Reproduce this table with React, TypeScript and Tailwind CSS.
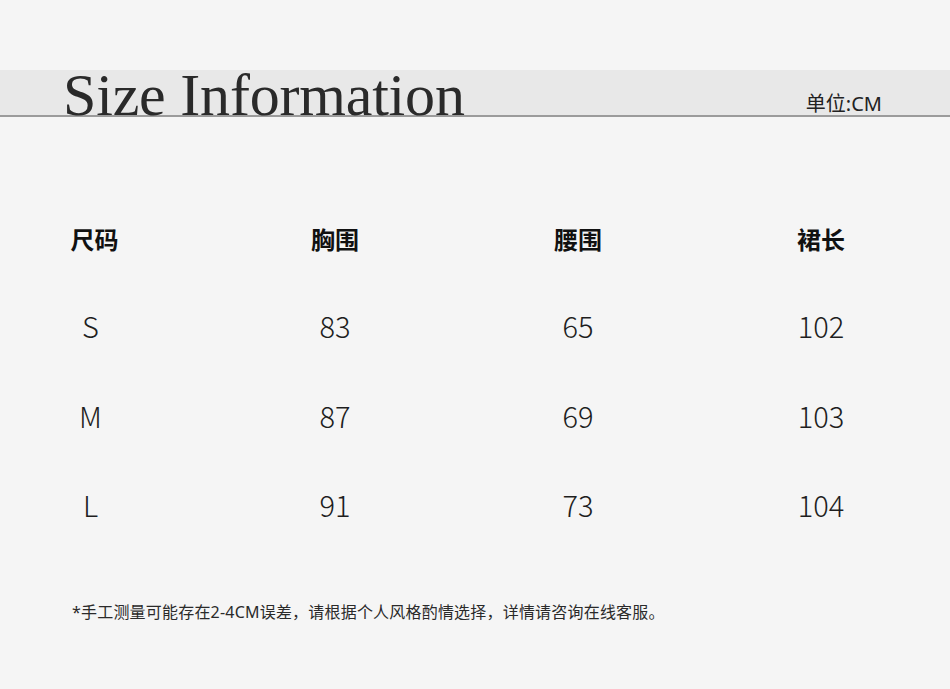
const rows = [
  { size: "S", bust: "83", waist: "65", length: "102" },
  { size: "M", bust: "87", waist: "69", length: "103" },
  { size: "L", bust: "91", waist: "73", length: "104" },
];

const sans = "font-['Noto_Sans','Noto_Sans_CJK_SC',sans-serif]";

export default function App() {
  return (
    <div className={`min-h-[689px] w-[950px] bg-[#f5f5f5] pt-[70px] text-[#1c1c1c] ${sans}`}>
      {/* title band */}
      <div className="flex h-[47px] items-end border-b-2 border-[#9b9b9b] bg-[#e8e8e8] pl-[63px] pr-[68px]">
        <h1 className="mb-[-10px] font-['Liberation_Serif',serif] text-[60px] leading-none tracking-[-0.2px] text-[#2a2a2a]">
          Size Information
        </h1>
        <span className="mb-[1px] ml-auto text-[20px] leading-none text-[#222]">
          单位:CM
        </span>
      </div>

      {/* table */}
      <div className="mt-[80px]">
        <div className="grid h-[84px] grid-cols-[100px_100px_100px_100px] items-center gap-x-[143px] pl-[42px] font-['Noto_Sans_CJK_SC',sans-serif] text-[24px] font-bold leading-none text-[#111]">
          <div className="pl-[5px] text-center">尺码</div>
          <div className="text-center">胸围</div>
          <div className="text-center">腰围</div>
          <div className="text-center">裙长</div>
        </div>
        {rows.map((r) => (
          <div
            key={r.size}
            className="grid h-[89.5px] grid-cols-[100px_100px_100px_100px] items-center gap-x-[143px] pl-[42px] font-['Noto_Sans_CJK_SC',sans-serif] text-[29px] font-light leading-none text-[#1e1e1e]"
          >
            <div className="pr-[3px] text-center">{r.size}</div>
            <div className="text-center">{r.bust}</div>
            <div className="text-center">{r.waist}</div>
            <div className="text-center">{r.length}</div>
          </div>
        ))}
      </div>

      <p className="mt-[54px] pl-[72px] text-[16px] leading-none tracking-[0.2px] text-[#2a2a2a]">
        *手工测量可能存在2-4CM误差，请根据个人风格酌情选择，详情请咨询在线客服。
      </p>
    </div>
  );
}
